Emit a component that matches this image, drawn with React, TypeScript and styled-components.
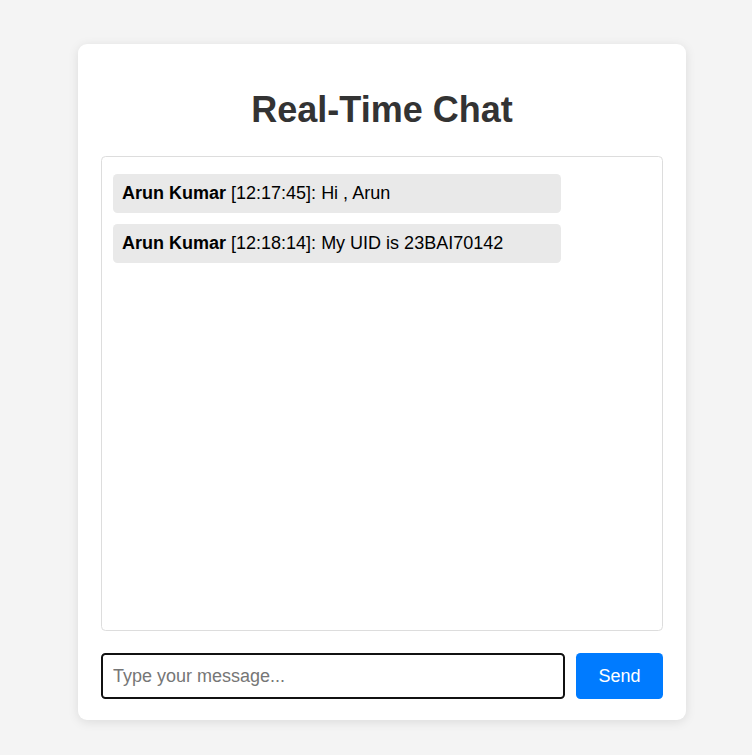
import React from "react";
import styled, { createGlobalStyle } from "styled-components";

const GlobalStyle = createGlobalStyle`
  html, body {
    margin: 0;
    padding: 0;
    background: #f4f4f4;
    font-family: "Liberation Sans", Arial, sans-serif;
  }
`;

const Page = styled.div`
  display: flex;
  justify-content: center;
  padding: 44px 0 35px 12px;
`;

const Card = styled.div`
  width: 608px;
  box-sizing: border-box;
  background: #ffffff;
  border-radius: 9px;
  box-shadow: 0 2px 11px rgba(0, 0, 0, 0.1);
  padding: 22px 23px 21px 23px;
`;

const Title = styled.h1`
  margin: 23px 0 26px;
  font-size: 36px;
  line-height: 41px;
  font-weight: 700;
  text-align: center;
  color: #333333;
`;

const ChatBox = styled.div`
  height: 475px;
  box-sizing: border-box;
  border: 1px solid #dddddd;
  border-radius: 4.5px;
  padding: 17px 11px 11px;
  display: flex;
  flex-direction: column;
  align-items: flex-start;
  gap: 11px;
  overflow-y: auto;
`;

const Bubble = styled.div`
  width: 448px;
  box-sizing: border-box;
  background: #e9e9e9;
  border-radius: 4.5px;
  padding: 9px;
  font-size: 18px;
  line-height: 21px;
  color: #000000;
`;

const Sender = styled.strong`
  font-weight: 700;
`;

const InputRow = styled.div`
  display: flex;
  gap: 11px;
  margin-top: 22px;
`;

const MessageInput = styled.input`
  flex: 1;
  min-width: 0;
  height: 46px;
  box-sizing: border-box;
  border: 2px solid #111111;
  border-radius: 4.5px;
  padding: 0 10px;
  font-family: "Liberation Sans", Arial, sans-serif;
  font-size: 18px;
  color: #000;
  outline: none;
  &::placeholder {
    color: #767676;
  }
`;

const SendButton = styled.button`
  width: 87px;
  height: 46px;
  border: none;
  border-radius: 4.5px;
  background: #007bff;
  color: #ffffff;
  font-family: "Liberation Sans", Arial, sans-serif;
  font-size: 18px;
  cursor: pointer;
`;

const messages = [
  { user: "Arun Kumar", time: "12:17:45", text: "Hi , Arun" },
  { user: "Arun Kumar", time: "12:18:14", text: "My UID is 23BAI70142" },
];

export default function App() {
  return (
    <>
      <GlobalStyle />
      <Page>
        <Card>
          <Title>Real-Time Chat</Title>
          <ChatBox>
            {messages.map((m, i) => (
              <Bubble key={i}>
                <Sender>{m.user}</Sender> [{m.time}]: {m.text}
              </Bubble>
            ))}
          </ChatBox>
          <InputRow>
            <MessageInput autoFocus placeholder="Type your message..." />
            <SendButton>Send</SendButton>
          </InputRow>
        </Card>
      </Page>
    </>
  );
}
